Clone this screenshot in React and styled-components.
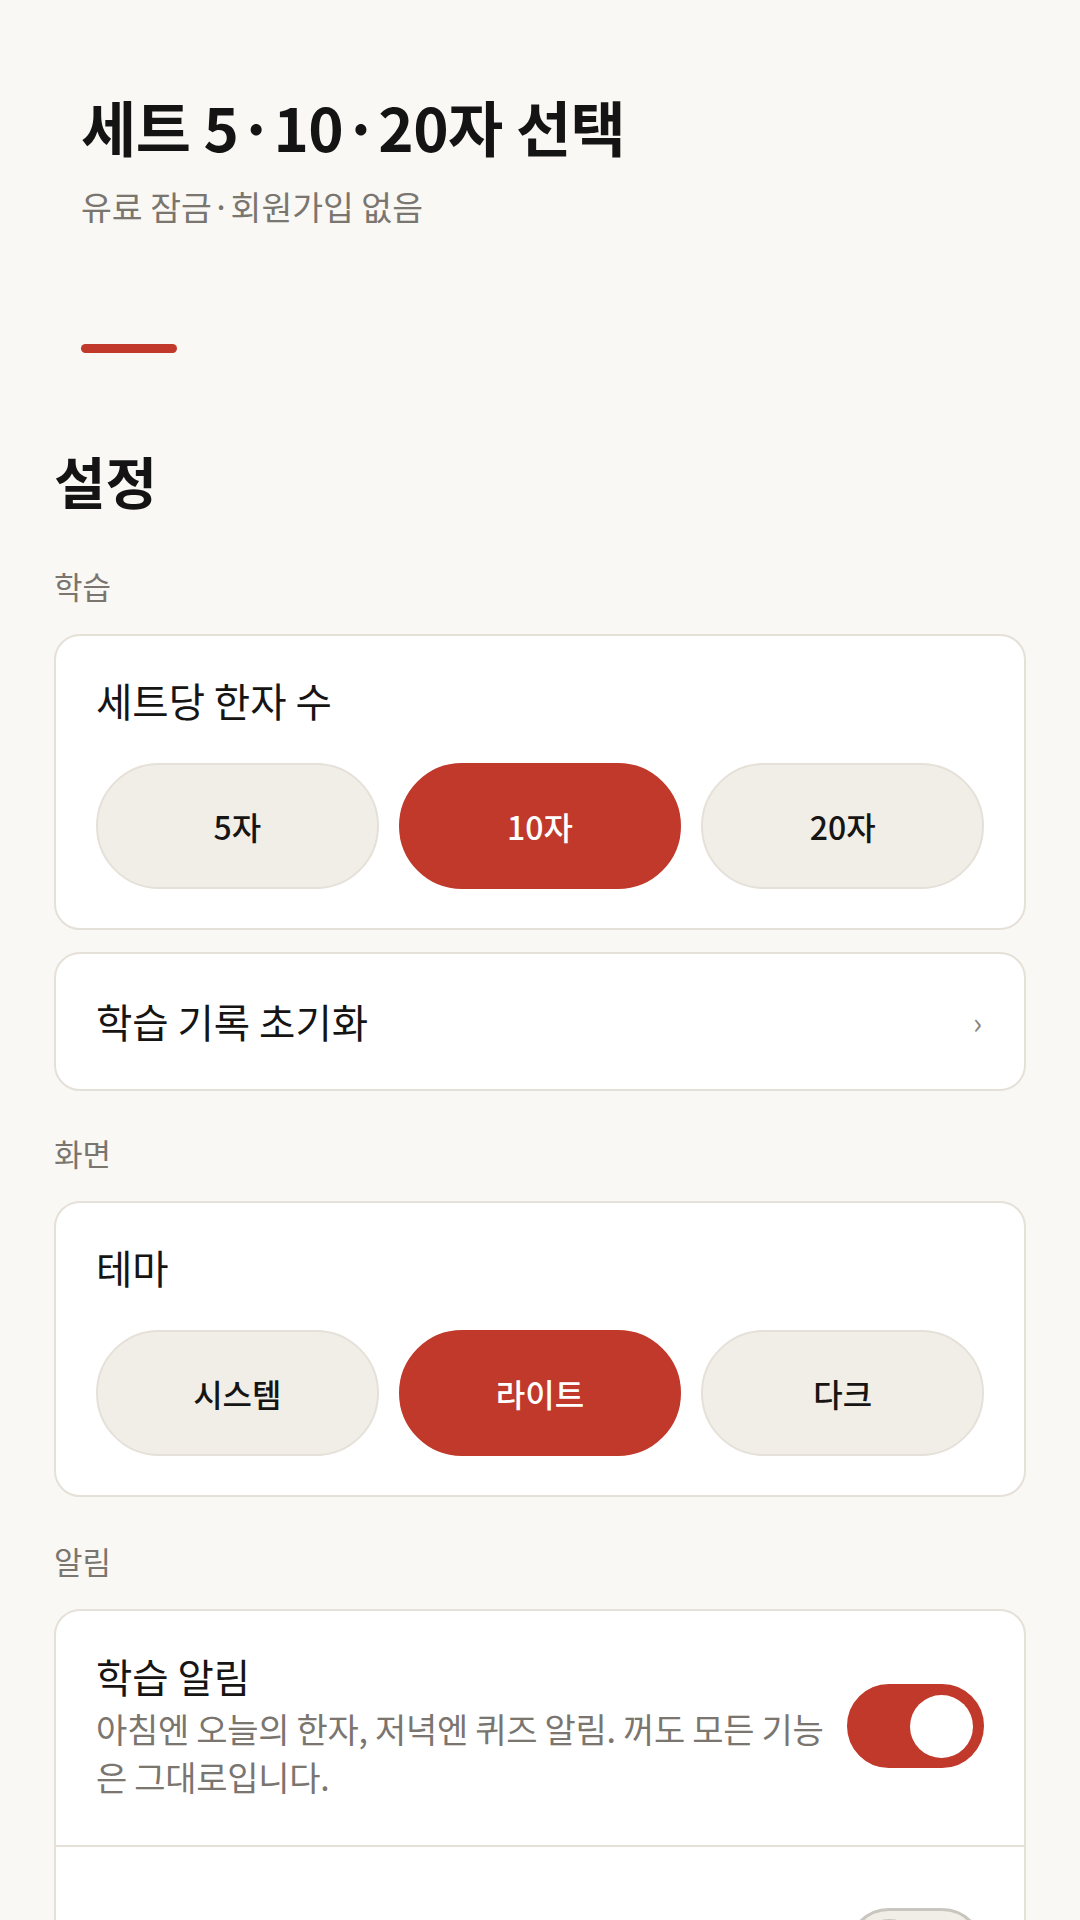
import React from "react";
import styled, { createGlobalStyle } from "styled-components";

const GlobalStyle = createGlobalStyle`
  html, body {
    margin: 0;
    padding: 0;
    background: #f9f8f4;
  }
  body {
    font-family: "Noto Sans CJK KR", "Noto Sans", sans-serif;
    color: #161514;
  }
  * { box-sizing: border-box; }
`;

const Page = styled.div`
  width: 1080px;
  min-height: 1920px;
  padding: 87px 54px 80px;
  background: #f9f8f4;
`;

const Hero = styled.header`
  padding-left: 27px;
  display: flex;
  flex-direction: column;
`;

const Title = styled.h1`
  margin: 0;
  font-size: 60px;
  line-height: 78px;
  font-weight: 700;
  letter-spacing: -0.5px;
  color: #141414;
`;

const Subtitle = styled.p`
  margin: 17px 0 0;
  font-size: 33.5px;
  line-height: 48px;
  color: #7a756f;
`;

const AccentBar = styled.div`
  margin-top: 114px;
  width: 96px;
  height: 9px;
  border-radius: 5px;
  background: #c0392b;
`;

const Heading = styled.h2`
  margin: 92px 0 0;
  font-size: 56px;
  line-height: 70px;
  font-weight: 700;
  color: #141414;
`;

const Section = styled.section`
  margin-top: ${(p) => p.$mt}px;
  display: flex;
  flex-direction: column;
  gap: 22px;
`;

const SectionLabel = styled.div`
  font-size: 31px;
  line-height: 40px;
  color: #7a756f;
  margin-bottom: 6px;
`;

const Card = styled.div`
  background: #ffffff;
  border: 2px solid #e5e0d8;
  border-radius: 26px;
  overflow: hidden;
`;

const OptionBlock = styled.div`
  padding: 39px 40px 39px;
  display: flex;
  flex-direction: column;
  gap: 38px;
`;

const ItemTitle = styled.div`
  font-size: 39.5px;
  line-height: 50px;
  color: #161514;
`;

const Segments = styled.div`
  display: grid;
  grid-template-columns: repeat(3, 1fr);
  gap: 20px;
`;

const Segment = styled.button`
  height: 126px;
  border-radius: 63px;
  border: 2px solid ${(p) => (p.$active ? "#c0392b" : "#e5e0d8")};
  background: ${(p) => (p.$active ? "#c0392b" : "#f1eee8")};
  color: ${(p) => (p.$active ? "#ffffff" : "#161514")};
  font-family: "Noto Sans CJK KR", "Noto Sans", sans-serif;
  font-size: 32px;
  font-weight: 500;
  padding: 0;
  display: flex;
  align-items: center;
  justify-content: center;
`;

const LinkRow = styled.div`
  padding: 42px 40px 43px;
  display: flex;
  align-items: center;
  justify-content: space-between;
`;

const Chevron = styled.span`
  font-size: 30px;
  line-height: 50px;
  color: #8a847d;
  padding-right: 2px;
`;

const ToggleRow = styled.div`
  padding: ${(p) => p.$pad};
  display: flex;
  align-items: center;
  gap: 14px;
  & + & {
    border-top: 2px solid #e5e0d8;
  }
`;

const RowText = styled.div`
  flex: 1;
  min-width: 0;
  display: flex;
  flex-direction: column;
`;

const Description = styled.div`
  margin-top: 4px;
  font-size: 34px;
  line-height: 48px;
  letter-spacing: -0.3px;
  color: #7a756f;
`;

const Toggle = styled.div`
  flex: none;
  width: 137px;
  height: 84px;
  border-radius: 42px;
  display: flex;
  align-items: center;
  justify-content: ${(p) => (p.$on ? "flex-end" : "flex-start")};
  padding: 0 8px;
  background: ${(p) => (p.$on ? "#c0392b" : "#f1eee8")};
  border: 3px solid ${(p) => (p.$on ? "#c0392b" : "#c9c5bf")};
`;

const Knob = styled.div`
  width: 63px;
  height: 63px;
  border-radius: 50%;
  background: ${(p) => (p.$on ? "#ffffff" : "#c9c5bf")};
`;

function SegmentCard({ title, options, active }) {
  return (
    <Card>
      <OptionBlock>
        <ItemTitle>{title}</ItemTitle>
        <Segments>
          {options.map((o) => (
            <Segment key={o} $active={o === active}>
              {o}
            </Segment>
          ))}
        </Segments>
      </OptionBlock>
    </Card>
  );
}

export default function App() {
  return (
    <>
      <GlobalStyle />
      <Page>
        <Hero>
          <Title>세트 5·10·20자 선택</Title>
          <Subtitle>유료 잠금·회원가입 없음</Subtitle>
          <AccentBar />
        </Hero>

        <Heading>설정</Heading>

        <Section $mt={51}>
          <SectionLabel>학습</SectionLabel>
          <SegmentCard title="세트당 한자 수" options={["5자", "10자", "20자"]} active="10자" />
          <Card>
            <LinkRow>
              <ItemTitle>학습 기록 초기화</ItemTitle>
              <Chevron>›</Chevron>
            </LinkRow>
          </Card>
        </Section>

        <Section $mt={42}>
          <SectionLabel>화면</SectionLabel>
          <SegmentCard title="테마" options={["시스템", "라이트", "다크"]} active="라이트" />
        </Section>

        <Section $mt={44}>
          <SectionLabel>알림</SectionLabel>
          <Card>
            <ToggleRow $pad="40px 40px 44px">
              <RowText>
                <ItemTitle>학습 알림</ItemTitle>
                <Description>아침엔 오늘의 한자, 저녁엔 퀴즈 알림. 꺼도 모든 기능은 그대로입니다.</Description>
              </RowText>
              <Toggle $on>
                <Knob $on />
              </Toggle>
            </ToggleRow>
            <ToggleRow $pad="61px 40px 61px">
              <RowText>
                <ItemTitle>효과음</ItemTitle>
              </RowText>
              <Toggle>
                <Knob />
              </Toggle>
            </ToggleRow>
          </Card>
        </Section>
      </Page>
    </>
  );
}
